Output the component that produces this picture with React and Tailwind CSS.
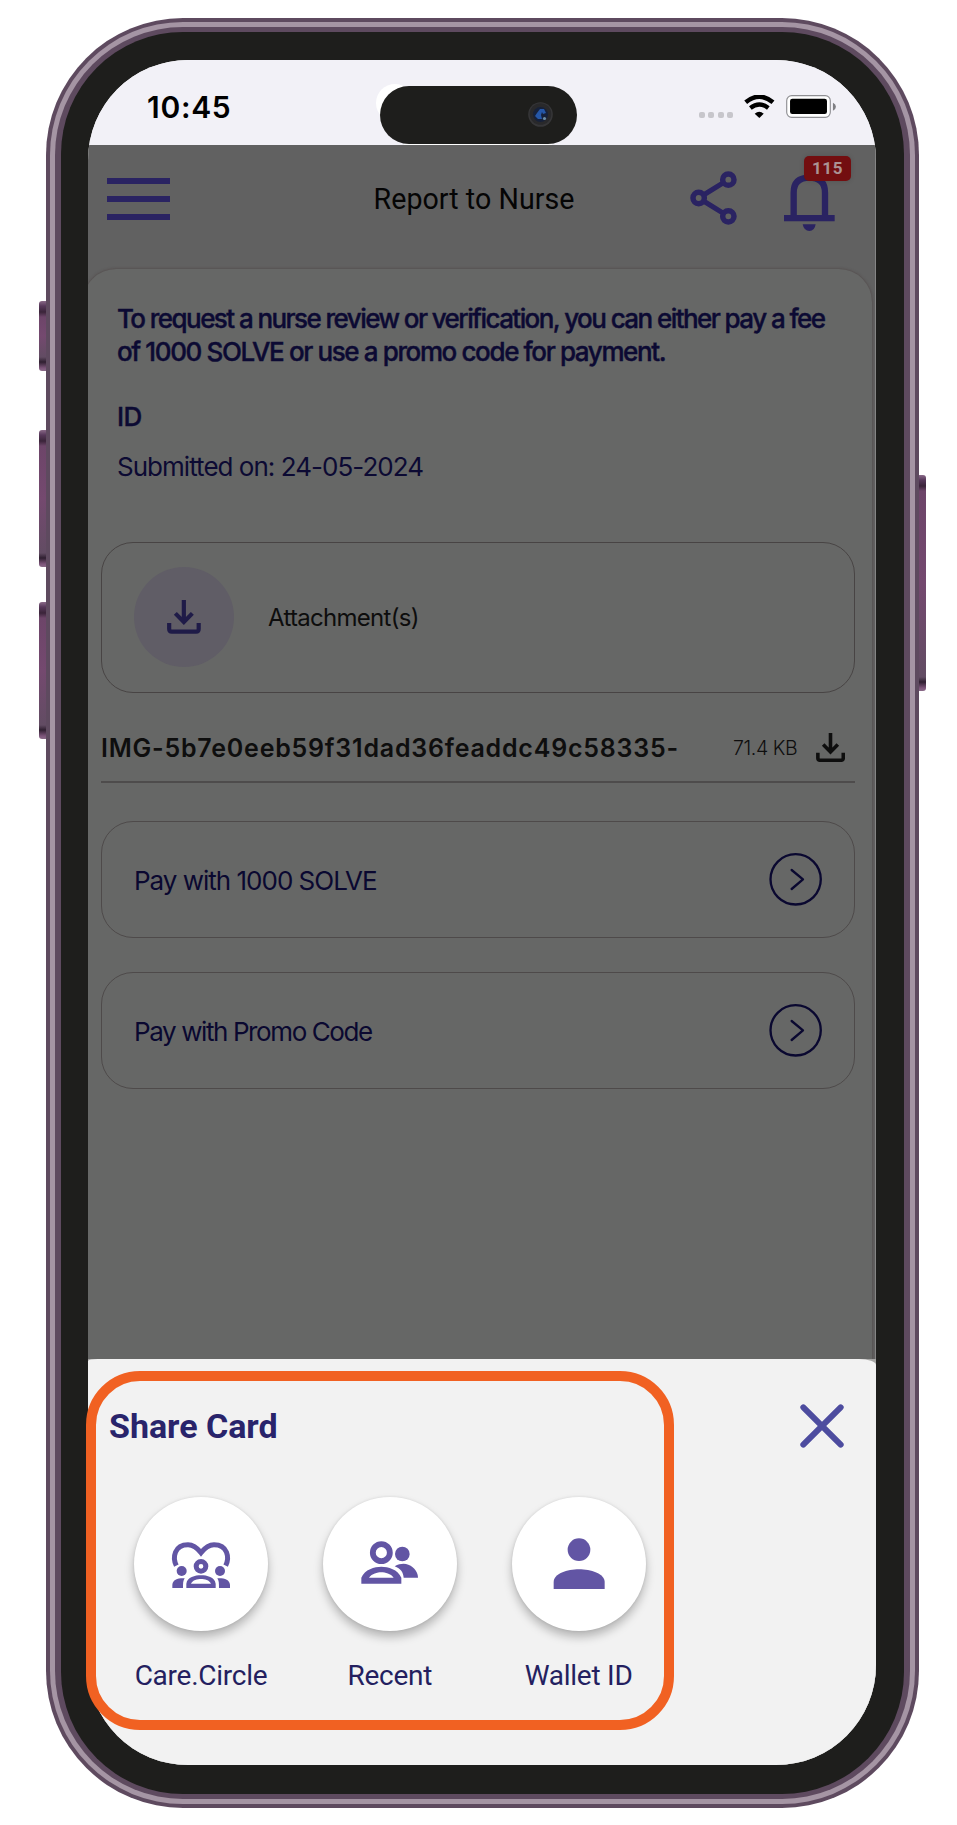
const inter = "font-['Inter',sans-serif]";
const roboto = "font-['Roboto',sans-serif]";

function DownloadIcon({ className }) {
  return (
    <svg viewBox="412 931 101 101" fill="none" stroke="currentColor" strokeWidth="12.5" className={className}>
      <path d="M462.5 931V996M437 971L462.5 997L488 971" />
      <path d="M418.5 1000V1018Q418.5 1026 426.5 1026H499Q507 1026 507 1018V1000" />
    </svg>
  );
}

function StatusBar() {
  return (
    <div className="relative flex h-[85px] shrink-0 items-start bg-[#f2f1f7]">
      <div className={`${inter} ml-[59px] mt-[29px] w-[99px] whitespace-nowrap text-[30px] font-semibold leading-[36px] text-black`}>
        <span className="tracking-[0.7px]">10:45</span>
      </div>
      <div className="relative ml-[134px] mt-[24px] h-[61px] w-[201px]">
        <div className="absolute left-[-4px] top-0 h-[38px] w-[38px] rounded-full bg-white" />
        <div className="absolute bottom-0 left-[24px] h-[4px] w-[148px] bg-white" />
        <div className="absolute left-0 top-[2px] flex h-[57.5px] w-[197px] items-center justify-end rounded-full bg-[#1e1e1c] pr-[24px]">
          <svg viewBox="0 0 25 25" className="h-[25px] w-[25px]">
            <circle cx="12.5" cy="12.5" r="12.3" fill="#363638" />
            <circle cx="12.5" cy="12" r="10.8" fill="#29292b" />
            <circle cx="12.5" cy="12.5" r="7.5" fill="#16213a" />
            <path d="M9 11L12 7L16 7L18 11L15 12L14 10L13 13L14 17L10 17L7 14Z" fill="#2557a8" />
            <circle cx="16.5" cy="16.5" r="1.6" fill="#6d8da3" />
          </svg>
        </div>
      </div>
      <div className="ml-[117.5px] mt-[51.5px] flex gap-[3.6px]">
        <i className="h-[6px] w-[6px] rounded-[2px] bg-[#c7c6cb]" />
        <i className="h-[6px] w-[6px] rounded-[2px] bg-[#c7c6cb]" />
        <i className="h-[6px] w-[6px] rounded-[2px] bg-[#c7c6cb]" />
        <i className="h-[6px] w-[6px] rounded-[2px] bg-[#c7c6cb]" />
      </div>
      <svg viewBox="794 284 92 70" className="ml-[11px] mt-[34.7px] h-[23.3px] w-[30.7px]">
        <path d="M799 306Q840 272 881 306" fill="none" stroke="#000" strokeWidth="13.5" />
        <path d="M813 323Q840 302 867 323" fill="none" stroke="#000" strokeWidth="13" />
        <path d="M826 340Q840 328 853 340L840 353Z" fill="#000" />
      </svg>
      <svg viewBox="918 286 150 70" className="ml-[11px] mt-[35.3px] h-[23.3px] w-[50px] shrink-0">
        <rect x="920" y="288" width="131" height="65" rx="15" fill="#fff" stroke="#8f8f93" strokeWidth="3.5" />
        <rect x="930" y="297" width="111" height="46" rx="7" fill="#000" />
        <path d="M1059 309Q1068 314 1068 321Q1068 328 1059 333Z" fill="#7f7f83" />
      </svg>
    </div>
  );
}

function Header() {
  return (
    <div className="flex h-[107px] shrink-0 items-center pl-[19px]">
      <div className="flex flex-col gap-[12px]">
        <i className="h-[6px] w-[62.5px] bg-[#2a2362]" />
        <i className="h-[6px] w-[62.5px] bg-[#2a2362]" />
        <i className="h-[6px] w-[62.5px] bg-[#2a2362]" />
      </div>
      <div className={`${roboto} ml-[154.5px] w-[300px] whitespace-nowrap text-center text-[28.6px] leading-[34px] tracking-[0.05px] text-[#050505]`}>
        Report to Nurse
      </div>
      <svg viewBox="629 512 141 162" className="mb-[2px] ml-[66px] h-[54px] w-[47px] text-[#2a2362]" fill="none" stroke="currentColor">
        <path d="M655 593L744 538M655 593L744 648" strokeWidth="15" />
        <circle cx="655" cy="593" r="17" strokeWidth="16.5" fill="#616161" />
        <circle cx="744" cy="538" r="17" strokeWidth="16.5" fill="#616161" />
        <circle cx="744" cy="648" r="17" strokeWidth="16.5" fill="#616161" />
      </svg>
      <div className="relative ml-[47px] mt-[11px] h-[76px] w-[67px] self-start">
        <svg viewBox="912 467 201 228" className="h-[76px] w-[67px] text-[#2a2362]">
          <path d="M941 650V577Q941 532 988 532Q1035 532 1035 577V650" fill="none" stroke="currentColor" strokeWidth="19" />
          <path d="M912 644H1064V663H912Z" fill="currentColor" />
          <path d="M968 672H1007Q1004 692 988 692Q972 692 968 672Z" fill="currentColor" />
        </svg>
        <div className={`${roboto} absolute left-[20px] top-0 flex h-[25px] w-[47px] items-center justify-center rounded-[5px] bg-[#730e10] text-[17px] font-bold tracking-[0.6px] text-[#ab9293] shadow-[0_0_5px_rgba(0,0,0,0.15)]`}>
          115
        </div>
      </div>
    </div>
  );
}

function PayRow({ children, spacing }) {
  return (
    <div className="flex h-[117px] items-center justify-between rounded-[32px] border border-[#4e4a4a] pl-[32px] pr-[32px]">
      <span className={`${inter} ${spacing} whitespace-nowrap pt-px text-[26px] text-[#0a0830]`}>{children}</span>
      <svg viewBox="866 461 160 158" className="h-[52.7px] w-[53.3px]" fill="none" stroke="#0a0830" strokeWidth="7">
        <circle cx="946" cy="540" r="75.5" />
        <path d="M934 512L968 540L934 569" strokeLinecap="round" strokeLinejoin="round" />
      </svg>
    </div>
  );
}

function Card() {
  return (
    <div className="-ml-[5px] flex h-[1120px] w-[789px] flex-col rounded-t-[33px] bg-[#666766] pl-[18px] pr-[17px] pt-[33px] shadow-[0_0_3px_rgba(60,40,40,0.5)]">
      <p className={`${inter} pl-[16px] text-[26px] font-medium leading-[33px] text-[#0c0a33] [-webkit-text-stroke:0.4px_#0c0a33]`}>
        <span className="block whitespace-nowrap tracking-[-1.57px]">To request a nurse review or verification, you can either pay a fee</span>
        <span className="block whitespace-nowrap tracking-[-1.38px]">of 1000 SOLVE or use a promo code for payment.</span>
      </p>
      <div className={`${inter} mt-[32px] pl-[16px] text-[26px] font-medium leading-[33px] tracking-[-0.6px] text-[#0c0a33] [-webkit-text-stroke:0.4px_#0c0a33]`}>ID</div>
      <div className={`${inter} mt-[17px] pl-[16px] text-[26px] leading-[33px] tracking-[-0.97px] text-[#0c0a33]`}>Submitted on: 24-05-2024</div>

      <div className="mt-[59px] flex h-[151px] shrink-0 items-center rounded-[32px] border border-[#484444] pl-[32px]">
        <div className="mb-px flex h-[100px] w-[100px] items-center justify-center rounded-full bg-[#605d66]">
          <DownloadIcon className="h-[33.7px] w-[33.7px] text-[#1f1b48]" />
        </div>
        <span className={`${inter} ml-[34px] text-[24px] tracking-[-0.7px] text-[#0d0d0d]`}>Attachment(s)</span>
      </div>

      <div className="mt-[20px] flex h-[70px] shrink-0 items-center border-b-2 border-[#4e4c4c]">
        <span className={`${inter} w-[632px] whitespace-nowrap pt-[3px] text-[25px] font-semibold tracking-[0.78px] text-[#0e0e0e]`}>IMG-5b7e0eeb59f31dad36feaddc49c58335-</span>
        <span className={`${inter} w-[83px] whitespace-nowrap pt-[4px] text-[19.5px] font-light tracking-[-0.4px] text-[#0e0e0e]`}>71.4 KB</span>
        <DownloadIcon className="h-[29px] w-[29px] text-[#0e0e0e]" />
      </div>

      <div className="mt-[38px] flex flex-col gap-[34px]">
        <PayRow spacing="tracking-[-1px]">Pay with 1000 SOLVE</PayRow>
        <PayRow spacing="tracking-[-1.4px]">Pay with Promo Code</PayRow>
      </div>
    </div>
  );
}

function ShareOption({ label, viewBox, children }) {
  return (
    <div className="flex w-[134px] flex-col items-center">
      <div className="h-[134px] w-[134px] rounded-full bg-white shadow-[0_6px_10px_rgba(0,0,0,0.25),0_0_3px_rgba(0,0,0,0.1)]">
        <svg viewBox={viewBox} className="h-[134px] w-[134px] text-[#6255a4]" fill="currentColor">
          {children}
        </svg>
      </div>
      <span className={`${roboto} mt-[28px] whitespace-nowrap text-[28px] leading-[34px] tracking-[-0.25px] text-[#241f60]`}>{label}</span>
    </div>
  );
}

function ShareSheet() {
  return (
    <div className="h-[406px] shrink-0 bg-[#a6a6a5]">
      <div className="h-full rounded-tl-[10px_2px] rounded-tr-[17px_6px] bg-[#f2f2f2] pl-[21px] pr-[32px] pt-[45px]">
        <div className="flex h-[44px] items-center justify-between">
          <h2 className={`${roboto} text-[34px] font-bold leading-[44px] tracking-[-0.03px] text-[#29246b]`}>Share Card</h2>
          <svg viewBox="959 193 132 132" className="h-[44px] w-[44px]" stroke="#4d4c9f" strokeWidth="18" strokeLinecap="round">
            <path d="M969 203L1081 315M1081 203L969 315" />
          </svg>
        </div>
        <div className="mt-[49px] flex gap-[54.8px] pl-[25px]">
          <ShareOption label="Care.Circle" viewBox="312 473 402 402">
            <path d="M439 679C427 655 433 616 474 616C492 616 502 626 513 640C524 626 534 616 552 616C593 616 599 655 587 679" fill="none" stroke="currentColor" strokeWidth="15" />
            <circle cx="513" cy="681" r="14.5" fill="none" stroke="currentColor" strokeWidth="15" />
            <circle cx="455" cy="695" r="15" />
            <circle cx="570" cy="695" r="15" />
            <path d="M427 746V736C429 721 443 716 464 717C459 724 459 733 459 746Z" />
            <path d="M600 746V736C598 721 584 716 562 717C567 724 567 733 567 746Z" />
            <path fillRule="evenodd" d="M469 746V733C472 713 495 708 513 708C531 708 554 713 557 733V746ZM483 733H543C538 722 524 719 513 719C502 719 488 722 483 733Z" />
          </ShareOption>
          <ShareOption label="Recent" viewBox="879 473 402 402">
            <circle cx="1054" cy="640" r="25.5" fill="none" stroke="currentColor" strokeWidth="17.5" />
            <circle cx="1117" cy="644" r="22" />
            <path fillRule="evenodd" d="M994 733V715C1004 690 1034 682 1054 682C1074 682 1104 690 1114 715V733ZM1017 715H1091C1082 703 1066 699 1054 699C1042 699 1026 703 1017 715Z" />
            <path d="M1094 681C1110 672 1124 672 1135 676C1155 684 1164 700 1164 715H1121C1120 699 1112 688 1094 681Z" />
          </ShareOption>
          <ShareOption label="Wallet ID" viewBox="94 473 402 402">
            <circle cx="295" cy="631" r="34" />
            <path d="M219 749V728C219 703 260 690 295 690C330 690 372 703 372 728V749Z" />
          </ShareOption>
        </div>
      </div>
    </div>
  );
}

const keyFace =
  "absolute bg-[linear-gradient(to_bottom,#8a6a88_0,#57385a_5px,#3a2439_11px,#6d4569_16px,#74496f_50%,#624c63_calc(100%-14px),#2f1f30_calc(100%-9px),#7d557a_calc(100%-3px),#8a6a88_100%)]";

export default function App() {
  return (
    <div className="relative h-[1825px] w-[957px] overflow-hidden bg-white pl-[46px] pt-[18px]">
      <div className={`${keyFace} left-[39px] top-[301px] h-[70px] w-[9px] rounded-l-[3px]`} />
      <div className={`${keyFace} left-[39px] top-[430px] h-[137px] w-[9px] rounded-l-[3px]`} />
      <div className={`${keyFace} left-[39px] top-[602px] h-[137px] w-[9px] rounded-l-[3px]`} />
      <div className={`${keyFace} left-[917px] top-[475px] h-[216px] w-[9px] rounded-r-[3px]`} />

      <div className="relative h-[1790px] w-[873px] rounded-[137px] bg-[#5e4a5f] p-[4px]">
        <div className="h-full rounded-[133px] bg-[#a595a4] p-[5px]">
          <div className="h-full rounded-[128px] bg-[#5e4a5f] px-[6px] py-[5px]">
            <div className="h-full rounded-[122px] bg-[#1e1e1c] pb-[29px] pl-[27px] pr-[28px] pt-[28px]">
              <div className="flex h-[1705px] w-[788px] flex-col overflow-hidden rounded-[100px] bg-[#f2f2f2]">
                <StatusBar />
                <div className="flex h-[1214px] shrink-0 flex-col overflow-hidden border-r border-[#858585] bg-[#616161]">
                  <Header />
                  <div className="mt-[17px]">
                    <Card />
                  </div>
                </div>
                <ShareSheet />
              </div>
            </div>
          </div>
        </div>
        <div className="absolute left-[40px] top-[1353px] h-[359px] w-[588px] rounded-[54px] border-[10px] border-[#f16122]" />
      </div>
    </div>
  );
}
